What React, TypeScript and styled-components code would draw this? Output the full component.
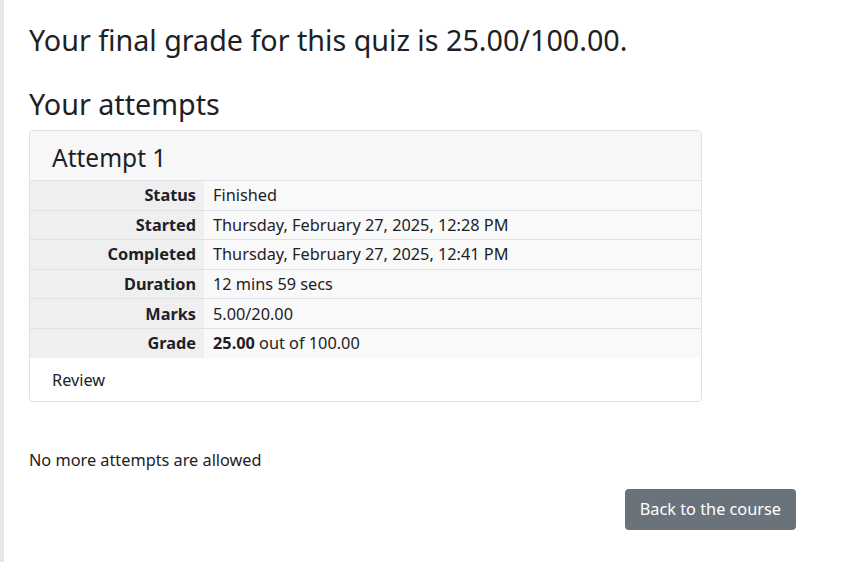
import styled, { createGlobalStyle } from "styled-components";

const GlobalStyle = createGlobalStyle`
  html, body {
    margin: 0;
    padding: 0;
    background: #fff;
    color: #1d2125;
    font-family: "Noto Sans", "Open Sans", sans-serif;
  }
`;

const rows: { label: string; value: React.ReactNode }[] = [
  { label: "Status", value: "Finished" },
  { label: "Started", value: "Thursday, February 27, 2025, 12:28 PM" },
  { label: "Completed", value: "Thursday, February 27, 2025, 12:41 PM" },
  { label: "Duration", value: "12 mins 59 secs" },
  { label: "Marks", value: "5.00/20.00" },
  {
    label: "Grade",
    value: (
      <>
        <b>25.00</b> out of 100.00
      </>
    ),
  },
];

const App = (): JSX.Element => {
  return (
    <Page>
      <GlobalStyle />
      <SideStrip />
      <Main>
        <FinalGrade>Your final grade for this quiz is 25.00/100.00.</FinalGrade>
        <SectionTitle>Your attempts</SectionTitle>
        <Card>
          <CardHeader>Attempt 1</CardHeader>
          <SummaryTable>
            <tbody>
              {rows.map((r, i) => (
                <tr key={r.label}>
                  <Label last={i === rows.length - 1 ? 1 : 0}>{r.label}</Label>
                  <Value last={i === rows.length - 1 ? 1 : 0}>{r.value}</Value>
                </tr>
              ))}
            </tbody>
          </SummaryTable>
          <CardFooter>
            <ReviewLink href="#">Review</ReviewLink>
          </CardFooter>
        </Card>
        <Notice>No more attempts are allowed</Notice>
        <ButtonRow>
          <BackButton>Back to the course</BackButton>
        </ButtonRow>
      </Main>
    </Page>
  );
};

export default App;

const Page = styled.div`
  display: flex;
  min-height: 562px;
`;

const SideStrip = styled.div`
  width: 4px;
  flex-shrink: 0;
  background: #e9e7e1;
`;

const Main = styled.div`
  flex: 1;
  padding: 20px 0 0 25px;
`;

const FinalGrade = styled.h3`
  margin: 0;
  font-size: 28.7px;
  font-weight: 400;
  line-height: 40px;
`;

const SectionTitle = styled.h3`
  margin: 24px 0 0;
  font-size: 28.7px;
  font-weight: 400;
  line-height: 40px;
`;

const Card = styled.div`
  width: 671px;
  margin-top: 6px;
  border: 1px solid #dee2e6;
  border-radius: 4px;
  overflow: hidden;
`;

const CardHeader = styled.div`
  height: 50px;
  box-sizing: border-box;
  padding: 10px 22px 0;
  background: #f7f7f7;
  border-bottom: 1px solid #dee2e6;
  font-size: 24.5px;
  line-height: 34px;
`;

const SummaryTable = styled.table`
  width: 100%;
  border-collapse: collapse;
  font-size: 16.3px;
`;

const Label = styled.th<{ last: number }>`
  width: 174px;
  box-sizing: border-box;
  height: 28.6px;
  padding: 0 8px 0 0;
  text-align: right;
  font-weight: 700;
  background: #efefef;
  border-bottom: ${(p) => (p.last ? "none" : "1px solid #dee2e6")};
`;

const Value = styled.td<{ last: number }>`
  height: 28.6px;
  padding: 0 0 0 9px;
  background: #f9f9f9;
  border-bottom: ${(p) => (p.last ? "none" : "1px solid #dee2e6")};
`;

const CardFooter = styled.div`
  padding: 10px 22px 9px;
  line-height: 24px;
`;

const ReviewLink = styled.a`
  color: #1d2125;
  text-decoration: none;
  font-size: 16.3px;
`;

const Notice = styled.p`
  margin: 46px 0 0;
  font-size: 16.3px;
  line-height: 24px;
`;

const ButtonRow = styled.div`
  display: flex;
  justify-content: flex-end;
  width: 767px;
  margin-top: 17px;
`;

const BackButton = styled.button`
  height: 41px;
  padding: 0 15px;
  border: none;
  border-radius: 4px;
  background: #6a737b;
  color: #fff;
  font-family: inherit;
  font-size: 16.3px;
`;
